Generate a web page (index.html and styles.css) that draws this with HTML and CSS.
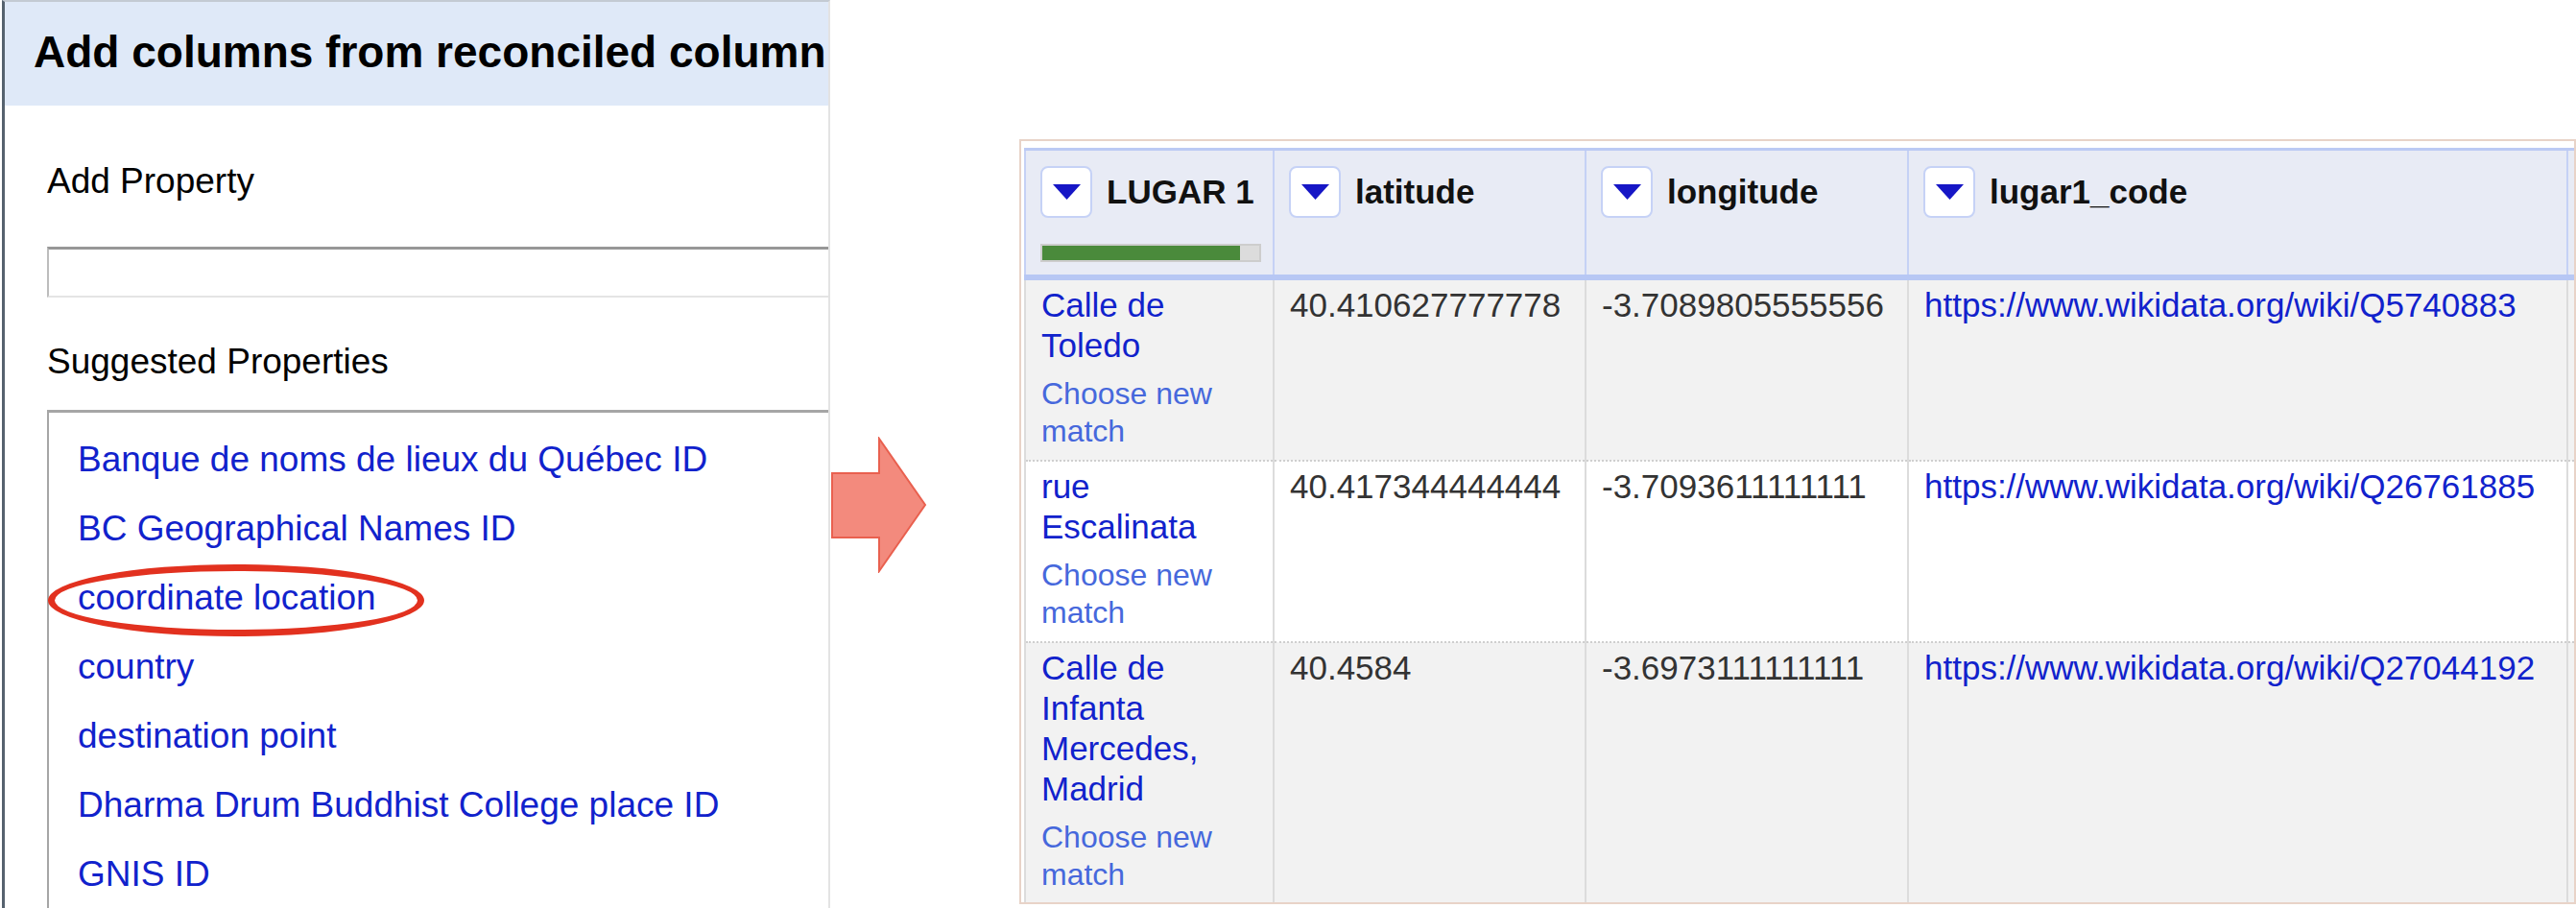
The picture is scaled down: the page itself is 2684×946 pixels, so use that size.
FILE: index.html
```html
<!DOCTYPE html>
<html lang="en">
<head>
  <meta charset="UTF-8">
  <title>Add columns from reconciled column</title>
  <link rel="stylesheet" href="styles.css">
</head>
<body>
  <div class="page">

    <!-- Dialog: add columns from reconciled column -->
    <section class="dialog">
      <div class="dialog-header">Add columns from reconciled column</div>
      <div class="dialog-body">
        <div class="field-label">Add Property</div>
        <input class="prop-input" type="text">
        <div class="field-label suggested">Suggested Properties</div>
        <ul class="suggestions">
          <li><a href="#">Banque de noms de lieux du Québec ID</a></li>
          <li><a href="#">BC Geographical Names ID</a></li>
          <li class="circled"><a href="#">coordinate location</a></li>
          <li><a href="#">country</a></li>
          <li><a href="#">destination point</a></li>
          <li><a href="#">Dharma Drum Buddhist College place ID</a></li>
          <li><a href="#">GNIS ID</a></li>
        </ul>
      </div>
    </section>

    <!-- Arrow between the two screenshots -->
    <div class="gap">
      <svg class="arrow" width="102" height="142" viewBox="0 0 102 142">
        <polygon points="2,38 51,38 51,2 99,71 51,140 51,105 2,105" fill="#f38a7d" stroke="#e9604f" stroke-width="2"/>
      </svg>
    </div>

    <!-- Data grid -->
    <section class="grid-box">
      <table class="data-table">
        <colgroup>
          <col class="c-name">
          <col class="c-lat">
          <col class="c-lon">
          <col class="c-code">
          <col class="c-more">
        </colgroup>
        <thead>
          <tr>
            <th>
              <div class="col-head">
                <span class="dd-btn"><svg width="29" height="16" viewBox="0 0 29 16"><polygon points="0,0 29,0 14.5,16" fill="#1616c6"/></svg></span>
                <span class="col-name">LUGAR 1</span>
              </div>
              <div class="recon-bar"><div class="recon-fill" style="width: 91%"></div></div>
            </th>
            <th>
              <div class="col-head">
                <span class="dd-btn"><svg width="29" height="16" viewBox="0 0 29 16"><polygon points="0,0 29,0 14.5,16" fill="#1616c6"/></svg></span>
                <span class="col-name">latitude</span>
              </div>
            </th>
            <th>
              <div class="col-head">
                <span class="dd-btn"><svg width="29" height="16" viewBox="0 0 29 16"><polygon points="0,0 29,0 14.5,16" fill="#1616c6"/></svg></span>
                <span class="col-name">longitude</span>
              </div>
            </th>
            <th>
              <div class="col-head">
                <span class="dd-btn"><svg width="29" height="16" viewBox="0 0 29 16"><polygon points="0,0 29,0 14.5,16" fill="#1616c6"/></svg></span>
                <span class="col-name">lugar1_code</span>
              </div>
            </th>
            <th></th>
          </tr>
        </thead>
        <tbody>
          <tr class="odd">
            <td class="name-cell">
              <a class="match" href="#">Calle de Toledo</a>
              <a class="rematch" href="#">Choose new match</a>
            </td>
            <td class="num">40.410627777778</td>
            <td class="num">-3.7089805555556</td>
            <td><a class="url" href="#">https://www.wikidata.org/wiki/Q5740883</a></td>
            <td></td>
          </tr>
          <tr class="even">
            <td class="name-cell">
              <a class="match" href="#">rue Escalinata</a>
              <a class="rematch" href="#">Choose new match</a>
            </td>
            <td class="num">40.417344444444</td>
            <td class="num">-3.7093611111111</td>
            <td><a class="url" href="#">https://www.wikidata.org/wiki/Q26761885</a></td>
            <td></td>
          </tr>
          <tr class="odd">
            <td class="name-cell">
              <a class="match" href="#">Calle de Infanta Mercedes, Madrid</a>
              <a class="rematch" href="#">Choose new match</a>
            </td>
            <td class="num">40.4584</td>
            <td class="num">-3.6973111111111</td>
            <td><a class="url" href="#">https://www.wikidata.org/wiki/Q27044192</a></td>
            <td></td>
          </tr>
        </tbody>
      </table>
    </section>

  </div>
</body>
</html>
```

FILE: styles.css
```css
body {
  margin: 0;
  background: #fff;
  font-family: "Liberation Sans", Arial, sans-serif;
}

.page {
  display: flex;
  height: 946px;
  overflow: hidden;
}

/* Left dialog */
.dialog {
  flex: none;
  width: 863px;
  margin-left: 2px;
  box-sizing: border-box;
  border-left: 3px solid #56626f;
  border-top: 2px solid #c3cad3;
  border-right: 2px solid #e3e3e3;
  overflow: hidden;
}

.dialog-header {
  height: 108px;
  box-sizing: border-box;
  padding: 24px 0 0 30px;
  background: #dfe9f8;
  color: #000;
  font-size: 46px;
  font-weight: bold;
  line-height: 56px;
  white-space: nowrap;
}

.dialog-body {
  padding-left: 44px;
}

.field-label {
  margin-top: 57px;
  font-size: 37px;
  line-height: 44px;
  color: #000;
}

.field-label.suggested {
  margin-top: 45px;
}

.prop-input {
  display: block;
  width: 900px;
  height: 53px;
  margin: 46px 0 0;
  padding: 0;
  box-sizing: border-box;
  background: #fff;
  border: none;
  border-top: 3px solid #979797;
  border-left: 2px solid #bdbdbd;
  border-bottom: 2px solid #e4e4e4;
  outline: none;
}

.suggestions {
  width: 900px;
  height: 600px;
  margin: 28px 0 0;
  padding: 13px 0 0 30px;
  box-sizing: border-box;
  list-style: none;
  border: 3px solid #a6a6a6;
  border-left-width: 2px;
}

.suggestions li {
  font-size: 37px;
  line-height: 72px;
  white-space: nowrap;
}

.suggestions a {
  color: #1122cc;
  text-decoration: none;
}

/* red annotation ring */
.suggestions li.circled {
  position: relative;
}

.suggestions li.circled::after {
  content: "";
  position: absolute;
  left: -31px;
  top: 1px;
  width: 392px;
  height: 75px;
  box-sizing: border-box;
  border: 7px solid #e2311f;
  border-radius: 50%;
}

/* Arrow column */
.gap {
  flex: none;
  width: 197px;
}

.arrow {
  display: block;
  margin-top: 455px;
}

/* Right data grid */
.grid-box {
  flex: 1;
  height: 797px;
  margin-top: 145px;
  padding: 7px 0 0 3px;
  box-sizing: border-box;
  border: 2px solid #e8d3c8;
  overflow: hidden;
}

.data-table {
  width: 1907px;
  table-layout: fixed;
  border-collapse: collapse;
}

.c-name { width: 259px; }
.c-lat { width: 325px; }
.c-lon { width: 336px; }
.c-code { width: 687px; }
.c-more { width: 300px; }

.data-table th {
  padding: 16px 16px 13px 15px;
  vertical-align: top;
  text-align: left;
  background: #e8ebf5;
  border-top: 3px solid #bccaf4;
  border-bottom: 6px solid #b7c7f4;
  border-left: 2px solid #c5d1f5;
  border-right: 2px solid #c5d1f5;
}

.col-head {
  display: flex;
  align-items: center;
  height: 54px;
}

.dd-btn {
  flex: none;
  display: flex;
  align-items: center;
  justify-content: center;
  width: 54px;
  height: 54px;
  margin-right: 15px;
  box-sizing: border-box;
  background: #fff;
  border: 2px solid #c6d2f6;
  border-radius: 8px;
}

.col-name {
  color: #111;
  font-size: 35px;
  font-weight: bold;
  white-space: nowrap;
}

.recon-bar {
  width: 230px;
  height: 19px;
  margin-top: 27px;
  box-sizing: border-box;
  background: #dcdcdc;
  border: 2px solid #cdcdcd;
}

.recon-fill {
  height: 100%;
  background: #4a8a3b;
}

.data-table td {
  padding: 5px 16px 10px;
  vertical-align: top;
  color: #333;
  font-size: 35px;
  line-height: 42px;
  border-top: 2px dotted #cfcfcf;
  border-left: 2px solid #dcdcdc;
  border-right: 2px solid #dcdcdc;
}

.data-table tr.odd td {
  background: #f2f2f2;
}

.data-table tr.even td {
  background: #fff;
}

.data-table td.name-cell {
  padding-right: 28px;
}

.data-table td.num {
  padding-right: 8px;
  white-space: nowrap;
}

.match {
  display: block;
  color: #1122cc;
  text-decoration: none;
}

.rematch {
  display: block;
  margin-top: 10px;
  color: #4668dc;
  font-size: 32px;
  line-height: 39px;
  text-decoration: none;
}

.url {
  color: #1122cc;
  text-decoration: none;
  white-space: nowrap;
}
```
